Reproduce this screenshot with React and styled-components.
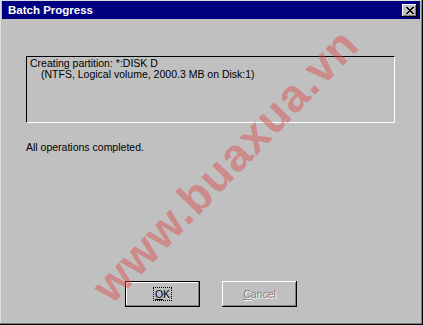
import React from "react";
import styled, { createGlobalStyle } from "styled-components";

const Global = createGlobalStyle`
  html, body { margin: 0; padding: 0; background: #c0c0c0; }
  body { font-family: "Liberation Sans", Arial, sans-serif; font-size: 10.5px; color: #000; }
`;

const Window = styled.div`
  position: relative;
  box-sizing: border-box;
  width: 423px;
  height: 325px;
  background: #c0c0c0;
  padding: 1px 3px 3px 2px;
  display: flex;
  flex-direction: column;
  overflow: hidden;
  box-shadow: inset -1px -1px #000, inset -2px -2px #808080, inset 1px 1px #dfdfdf;
`;

const TitleBar = styled.div`
  height: 18px;
  background: #000080;
  display: flex;
  align-items: center;
  justify-content: space-between;
  padding: 0 3px 0 6px;
`;

const Title = styled.span`
  color: #fff;
  font-weight: bold;
  font-size: 11.5px;
`;

const CloseButton = styled.div`
  box-sizing: border-box;
  width: 15px;
  height: 13px;
  background: #c0c0c0;
  display: flex;
  align-items: center;
  justify-content: center;
  box-shadow: inset -1px -1px #000, inset 1px 1px #fff, inset -2px -2px #808080;
`;

const Body = styled.div`
  flex: 1;
  display: flex;
  flex-direction: column;
  padding: 37px 0 15px 24px;
`;

const LogBox = styled.div`
  box-sizing: border-box;
  width: 369px;
  height: 67px;
  border-top: 1px solid #000;
  border-left: 1px solid #000;
  border-right: 1px solid #fff;
  border-bottom: 1px solid #fff;
  padding: 1px 3px;
  line-height: 11px;
`;

const LogLine = styled.div`
  padding-left: ${(p) => (p.$indent ? "11px" : "0")};
  white-space: nowrap;
`;

const Status = styled.div`
  margin-top: 18px;
  line-height: 13px;
`;

const Buttons = styled.div`
  margin-top: auto;
  display: flex;
  gap: 22px;
  padding-left: 99px;
`;

const Button = styled.div`
  box-sizing: border-box;
  width: 75px;
  height: 26px;
  display: flex;
  align-items: center;
  justify-content: center;
  background: #c0c0c0;
  color: ${(p) => (p.$disabled ? "#808080" : "#000")};
  text-shadow: ${(p) => (p.$disabled ? "1px 1px #fff" : "none")};
  box-shadow: ${(p) =>
    p.$default
      ? "inset 0 0 0 1px #000, inset -2px -2px #808080, inset 2px 2px #fff"
      : "inset -1px -1px #000, inset 1px 1px #fff, inset -2px -2px #808080"};
`;

const Focus = styled.span`
  outline: 1px dotted #000;
  outline-offset: 0px;
  padding: 0 1px;
`;

const U = styled.span`
  text-decoration: underline;
`;

const Watermark = styled.div`
  position: absolute;
  left: 225px;
  top: 165px;
  transform: translate(-50%, -50%) rotate(-46deg);
  font-family: "Liberation Sans", Arial, sans-serif;
  font-weight: bold;
  font-size: 46px;
  letter-spacing: 1px;
  color: rgba(220, 70, 70, 0.45);
  white-space: nowrap;
  pointer-events: none;
`;

export default function App() {
  return (
    <>
      <Global />
      <Window>
        <TitleBar>
          <Title>Batch Progress</Title>
          <CloseButton>
            <svg width="8" height="7" viewBox="0 0 8 7" shapeRendering="crispEdges">
              <path d="M0 0h2v1H0zM6 0h2v1H6zM1 1h2v1H1zM5 1h2v1H5zM2 2h4v1H2zM3 3h2v1H3zM2 4h4v1H2zM1 5h2v1H1zM5 5h2v1H5zM0 6h2v1H0zM6 6h2v1H6z" fill="#000" />
            </svg>
          </CloseButton>
        </TitleBar>
        <Body>
          <LogBox>
            <LogLine>Creating partition: *:DISK D</LogLine>
            <LogLine $indent>(NTFS, Logical volume, 2000.3 MB on Disk:1)</LogLine>
          </LogBox>
          <Status>All operations completed.</Status>
          <Buttons>
            <Button $default>
              <Focus>
                <U>O</U>K
              </Focus>
            </Button>
            <Button $disabled>
              <span>
                <U>C</U>ancel
              </span>
            </Button>
          </Buttons>
        </Body>
        <Watermark>www.buaxua.vn</Watermark>
      </Window>
    </>
  );
}
